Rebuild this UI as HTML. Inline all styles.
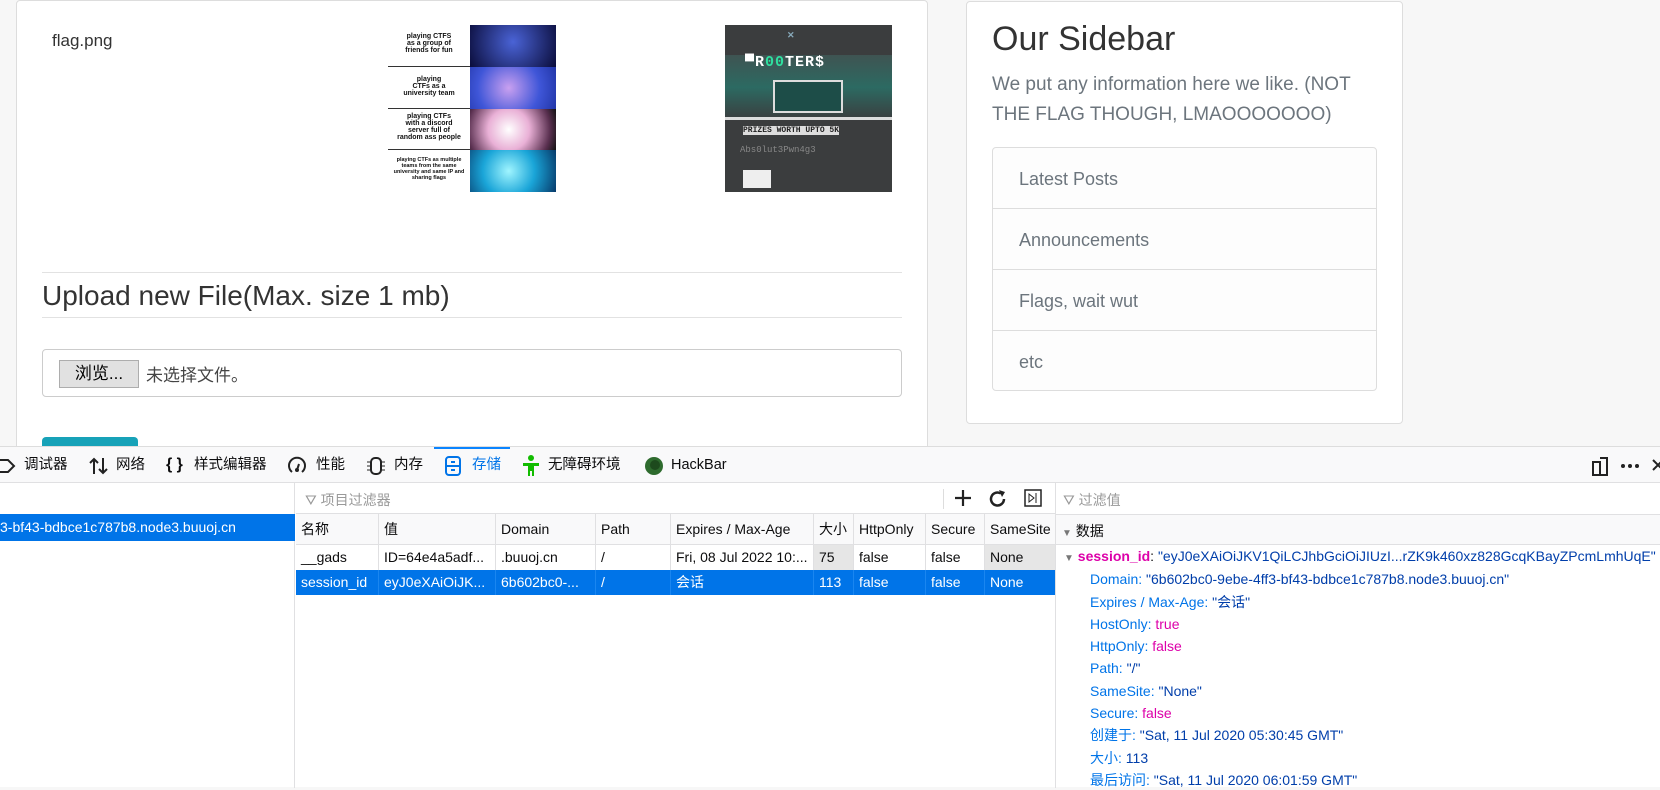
<!DOCTYPE html>
<html><head><meta charset="utf-8"><style>
*{box-sizing:border-box;margin:0;padding:0}
body{width:1660px;height:787px;overflow:hidden;background:#f7f7f7;font-family:"Liberation Sans","Noto Sans CJK SC",sans-serif;position:relative;color:#333}
.abs{position:absolute}
.card{position:absolute;background:#fff;border:1px solid #ddd;border-radius:4px}
.dt{position:absolute;left:0;top:446px;width:1660px;height:341px;background:#fff;border-top:1px solid #ddd;font-size:14px;color:#0c0c0d}
.tb{position:absolute;left:0;top:0;width:1660px;height:36px;background:#f9f9fa;border-bottom:1px solid #e0e0e2}
.tb span{position:absolute;top:0;line-height:36px;height:36px;font-size:14.5px;white-space:nowrap}
.hdr div,.row div{position:absolute;top:0;height:100%;padding-left:5px;line-height:30px;white-space:nowrap;overflow:hidden;border-left:1px solid #e0e0e2}
.r div{line-height:24px}
.kv{position:absolute;left:1090px;font-size:14px;line-height:20px;height:20px;color:#0074e8;white-space:nowrap}
.pk{color:#dd00a9}.dk{color:#003eaa}
</style></head><body>

<div class="card" style="left:16px;top:0;width:912px;height:460px"></div>
<div class="abs" style="left:52px;top:31px;font-size:17px;color:#333">flag.png</div>

<!-- meme -->
<div class="abs" style="left:388px;top:25px;width:168px;height:167px;background:#fff">
 <div class="abs" style="left:0;top:0;width:82px;height:167px;font:bold 7px 'Liberation Sans',sans-serif;color:#111;text-align:center">
  <div style="position:absolute;top:8px;width:82px">playing CTFS<br>as a group of<br>friends for fun</div>
  <div style="position:absolute;top:41px;width:82px;height:1px;background:#333"></div>
  <div style="position:absolute;top:51px;width:82px">playing<br>CTFs as a<br>university team</div>
  <div style="position:absolute;top:83px;width:82px;height:1px;background:#333"></div>
  <div style="position:absolute;top:88px;width:82px">playing CTFs<br>with a discord<br>server full of<br>random ass people</div>
  <div style="position:absolute;top:124px;width:82px;height:1px;background:#333"></div>
  <div style="position:absolute;top:132px;width:82px;font-size:5.5px">playing CTFs as multiple teams from the same university and same IP and sharing flags</div>
 </div>
 <div class="abs" style="left:82px;top:0;width:86px;height:42px;background:radial-gradient(circle at 50% 40%,#4a63d6,#0a0c3a)"></div>
 <div class="abs" style="left:82px;top:42px;width:86px;height:42px;background:radial-gradient(circle at 45% 50%,#c9a0f0,#3f56d8 60%,#2236a8)"></div>
 <div class="abs" style="left:82px;top:84px;width:86px;height:41px;background:radial-gradient(circle at 45% 50%,#fff,#e9b0d6 40%,#5a3050 80%,#111)"></div>
 <div class="abs" style="left:82px;top:125px;width:86px;height:42px;background:radial-gradient(circle at 45% 50%,#a0f5ff,#1aa5d8 50%,#073a6a)"></div>
</div>

<!-- rooters -->
<div class="abs" style="left:725px;top:25px;width:167px;height:167px;background:#3b3d3e;overflow:hidden">
 <div class="abs" style="left:0;top:30px;width:167px;height:65px;background:linear-gradient(#3f5452,#2c6a62 50%,#3b3d3e)"></div>
 <div class="abs" style="left:62px;top:5px;font:bold 9px 'Liberation Sans',sans-serif;color:#8ab">✕</div>
 <div class="abs" style="left:20px;top:29px;font:bold 15px 'Liberation Mono',monospace;color:#fff;letter-spacing:1px">▀R<span style="color:#2fe0a0">00</span>TER$</div>
 <div class="abs" style="left:48px;top:55px;width:70px;height:33px;background:#1d4d48;border:2px solid #ddd"></div>
 <div class="abs" style="left:0;top:92px;width:167px;height:3px;background:#ddd"></div>
 <div class="abs" style="left:18px;top:101px;font:bold 8px 'Liberation Mono',monospace;background:#ddd;color:#222">PRIZES WORTH UPTO 5K</div>
 <div class="abs" style="left:15px;top:120px;font:9px 'Liberation Mono',monospace;color:#888">Abs0lut3Pwn4g3</div>
 <div class="abs" style="left:18px;top:145px;width:28px;height:18px;background:#eee"></div>
</div>

<div class="abs" style="left:42px;top:272px;width:860px;height:1px;background:#e2e2e2"></div>
<div class="abs" style="left:42px;top:280px;font-size:28px;color:#333">Upload new File(Max. size 1 mb)</div>
<div class="abs" style="left:42px;top:317px;width:860px;height:1px;background:#e2e2e2"></div>
<div class="abs" style="left:42px;top:349px;width:860px;height:48px;border:1px solid #ccc;border-radius:4px;background:#fff">
 <div class="abs" style="left:16px;top:10px;width:80px;height:28px;background:#e1e1e1;border:1px solid #adadad;font-size:17px;line-height:26px;text-align:center;color:#000">浏览...</div>
 <div class="abs" style="left:103px;top:11px;font-size:17px;color:#444">未选择文件。</div>
</div>
<div class="abs" style="left:42px;top:437px;width:96px;height:12px;background:#17a2b8;border-radius:4px 4px 0 0"></div>

<div class="card" style="left:966px;top:1px;width:437px;height:423px"></div>
<div class="abs" style="left:992px;top:20px;font-size:34px;color:#333">Our Sidebar</div>
<div class="abs" style="left:992px;top:70px;width:390px;font-size:19px;line-height:30px;color:#6c757d">We put any information here we like. (NOT THE FLAG THOUGH, LMAOOOOOOO)</div>
<div class="abs" style="left:992px;top:147px;width:385px;height:244px;border:1px solid #ddd;border-radius:4px;background:#fdfdfd;font-size:18px;color:#6c757d">
 <div style="height:61px;line-height:62px;padding-left:26px;border-bottom:1px solid #ddd">Latest Posts</div>
 <div style="height:61px;line-height:62px;padding-left:26px;border-bottom:1px solid #ddd">Announcements</div>
 <div style="height:61px;line-height:62px;padding-left:26px;border-bottom:1px solid #ddd">Flags, wait wut</div>
 <div style="height:60px;line-height:62px;padding-left:26px">etc</div>
</div>

<div class="dt">
 <div class="tb">
  <svg class="abs" style="left:0;top:11px" width="18" height="16"><path d="M-2 2h10l6 6-6 6h-10" fill="none" stroke="#222" stroke-width="2"/></svg>
  <span style="left:24px">调试器</span>
  <svg class="abs" style="left:88px;top:9px" width="22" height="20"><path d="M6 18V3M2 7l4-4 4 4M15 2v15M11 13l4 4 4-4" fill="none" stroke="#222" stroke-width="2"/></svg>
  <span style="left:116px">网络</span>
  <span style="left:166px;font-weight:bold;font-size:16px">{ }</span>
  <span style="left:194px">样式编辑器</span>
  <svg class="abs" style="left:287px;top:9px" width="20" height="20"><path d="M5 16A8 8 0 1 1 15 16" fill="none" stroke="#222" stroke-width="2"/><circle cx="10" cy="14" r="2" fill="#222"/><path d="M10 14l2-6" stroke="#222" stroke-width="2"/></svg>
  <span style="left:316px">性能</span>
  <svg class="abs" style="left:365px;top:9px" width="22" height="20"><rect x="6" y="2" width="10" height="16" rx="4" fill="none" stroke="#222" stroke-width="2"/><path d="M2 6h4M2 10h4M2 14h4M16 6h4M16 10h4M16 14h4" stroke="#222"/></svg>
  <span style="left:394px">内存</span>
  <svg class="abs" style="left:444px;top:9px" width="18" height="20"><rect x="2" y="1" width="14" height="18" rx="3" fill="none" stroke="#0074e8" stroke-width="2"/><path d="M2 10h14M7 6h4M7 14h4" stroke="#0074e8" stroke-width="2"/></svg>
  <span style="left:472px;color:#0074e8">存储</span>
  <div class="abs" style="left:434px;top:0;width:76px;height:2px;background:#0a84ff"></div>
  <svg class="abs" style="left:522px;top:8px" width="18" height="22"><circle cx="9" cy="3" r="3" fill="#12bc00"/><path d="M1 8h16v3h-5v10h-2v-5h-2v5H6V11H1z" fill="#12bc00"/></svg>
  <span style="left:548px">无障碍环境</span>
  <svg class="abs" style="left:644px;top:9px" width="20" height="20"><circle cx="10" cy="10" r="9" fill="#2e6b2e"/><circle cx="11" cy="9" r="5" fill="#1d4a1d"/></svg>
  <span style="left:671px">HackBar</span>
  <svg class="abs" style="left:1590px;top:9px" width="20" height="20"><rect x="3" y="6" width="7" height="13" fill="none" stroke="#222" stroke-width="2"/><path d="M10 2h7v17h-7" fill="none" stroke="#222" stroke-width="2"/></svg>
  <svg class="abs" style="left:1620px;top:16px" width="20" height="6"><circle cx="3" cy="3" r="2" fill="#222"/><circle cx="10" cy="3" r="2" fill="#222"/><circle cx="17" cy="3" r="2" fill="#222"/></svg>
  <svg class="abs" style="left:1652px;top:12px" width="10" height="12"><path d="M1 1l10 10M11 1L1 11" stroke="#222" stroke-width="2"/></svg>
 </div>
 <!-- left panel -->
 <div class="abs" style="left:0;top:36px;width:295px;height:305px;border-right:1px solid #e0e0e2"></div>
 <div class="abs" style="left:0;top:67px;width:295px;height:27px;background:#0074e8;color:#fff;line-height:27px;font-size:14px;white-space:nowrap">3-bf43-bdbce1c787b8.node3.buuoj.cn</div>
 <!-- filter bar -->
 <div class="abs" style="left:296px;top:36px;width:759px;height:31px;border-bottom:1px solid #e0e0e2"></div>
 <div class="abs" style="left:305px;top:43px;color:#999;font-size:14px">⛛ 项目过滤器</div>
 <div class="abs" style="left:943px;top:42px;width:1px;height:20px;background:#ddd"></div>
 <svg class="abs" style="left:954px;top:42px" width="18" height="18"><path d="M9 1v16M1 9h16" stroke="#222" stroke-width="2.2"/></svg>
 <svg class="abs" style="left:988px;top:42px" width="20" height="20"><path d="M16 10A6.5 6.5 0 1 1 13 4.5" fill="none" stroke="#222" stroke-width="2.5"/><path d="M11 1l6 2-3 5z" fill="#222"/></svg>
 <svg class="abs" style="left:1024px;top:42px" width="18" height="18"><rect x="1" y="1" width="16" height="16" fill="none" stroke="#222" stroke-width="1.5"/><path d="M5 5l5 4-5 4z" fill="none" stroke="#222"/><path d="M12 4v10" stroke="#222"/></svg>
 <div class="abs" style="left:1055px;top:36px;width:1px;height:305px;background:#e0e0e2"></div>
 <div class="abs" style="left:1063px;top:43px;color:#999;font-size:14px">⛛ 过滤值</div>
 <div class="abs" style="left:1056px;top:67px;width:604px;height:1px;background:#e0e0e2"></div>
 <div class="abs" style="left:1056px;top:68px;width:604px;height:30px;background:#f9f9fa;border-bottom:1px solid #e0e0e2"></div>
 <div class="abs" style="left:1062px;top:74px;font-size:14px"><span style="color:#777;font-size:10px">▼</span> 数据</div>

 <!-- table -->
 <div class="hdr abs" style="left:296px;top:67px;width:759px;height:31px;background:#f9f9fa;border-bottom:1px solid #e0e0e2">
  <div style="left:0;width:82px;border-left:0">名称</div><div style="left:82px;width:117px">值</div><div style="left:199px;width:100px">Domain</div><div style="left:299px;width:75px">Path</div><div style="left:374px;width:143px">Expires / Max-Age</div><div style="left:517px;width:40px">大小</div><div style="left:557px;width:72px">HttpOnly</div><div style="left:629px;width:59px">Secure</div><div style="left:688px;width:71px">SameSite</div>
 </div>
 <div class="row r abs" style="left:296px;top:98px;width:759px;height:25px">
  <div style="left:0;width:82px;border-left:0">__gads</div><div style="left:82px;width:117px">ID=64e4a5adf...</div><div style="left:199px;width:100px">.buuoj.cn</div><div style="left:299px;width:75px">/</div><div style="left:374px;width:143px">Fri, 08 Jul 2022 10:...</div><div style="left:517px;width:40px;background:#e6e6e6">75</div><div style="left:557px;width:72px">false</div><div style="left:629px;width:59px">false</div><div style="left:688px;width:71px;background:#e6e6e6">None</div>
 </div>
 <div class="row r abs" style="left:296px;top:123px;width:759px;height:25px;background:#0074e8;color:#fff">
  <div style="left:0;width:82px;border-left:0">session_id</div><div style="left:82px;width:117px;border-color:#1a86f0">eyJ0eXAiOiJK...</div><div style="left:199px;width:100px;border-color:#1a86f0">6b602bc0-...</div><div style="left:299px;width:75px;border-color:#1a86f0">/</div><div style="left:374px;width:143px;border-color:#1a86f0">会话</div><div style="left:517px;width:40px;border-color:#1a86f0">113</div><div style="left:557px;width:72px;border-color:#1a86f0">false</div><div style="left:629px;width:59px;border-color:#1a86f0">false</div><div style="left:688px;width:71px;border-color:#1a86f0">None</div>
 </div>

 <!-- data -->
 <div class="kv" style="left:1064px;top:99px"><span style="color:#777;font-size:10px">▼</span> <b class="pk">session_id</b><span style="color:#0c0c0d">: </span><span class="dk">"eyJ0eXAiOiJKV1QiLCJhbGciOiJIUzI...rZK9k460xz828GcqKBayZPcmLmhUqE"</span></div>
 <div class="kv" style="top:122px">Domain: <span class="dk">"6b602bc0-9ebe-4ff3-bf43-bdbce1c787b8.node3.buuoj.cn"</span></div>
 <div class="kv" style="top:145px">Expires / Max-Age: <span class="dk">"会话"</span></div>
 <div class="kv" style="top:167px">HostOnly: <span class="pk">true</span></div>
 <div class="kv" style="top:189px">HttpOnly: <span class="pk">false</span></div>
 <div class="kv" style="top:211px">Path: <span class="dk">"/"</span></div>
 <div class="kv" style="top:234px">SameSite: <span class="dk">"None"</span></div>
 <div class="kv" style="top:256px">Secure: <span class="pk">false</span></div>
 <div class="kv" style="top:278px">创建于: <span class="dk">"Sat, 11 Jul 2020 05:30:45 GMT"</span></div>
 <div class="kv" style="top:301px">大小: <span class="dk">113</span></div>
 <div class="kv" style="top:323px">最后访问: <span class="dk">"Sat, 11 Jul 2020 06:01:59 GMT"</span></div>
</div>
</body></html>
